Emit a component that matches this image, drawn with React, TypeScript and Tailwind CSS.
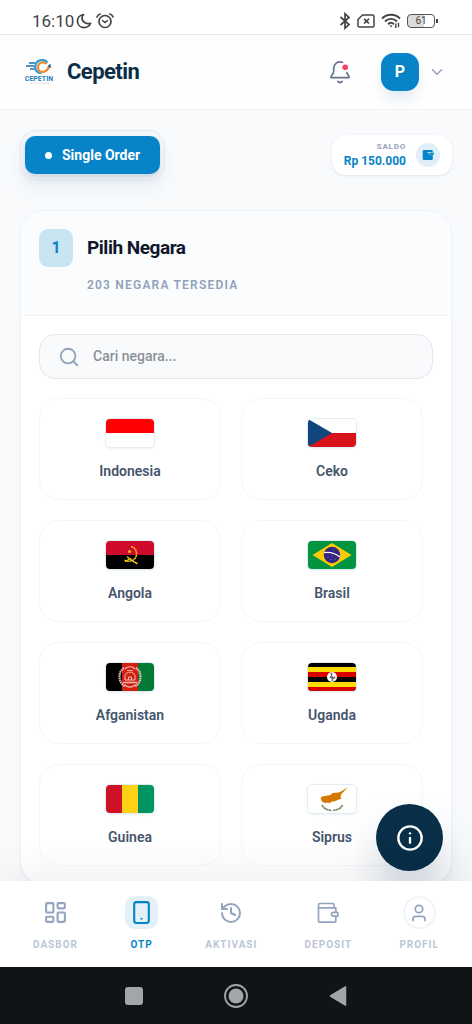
import type { ReactNode } from "react";
import { ChevronDown, History, Info, LayoutDashboard, Search, Smartphone } from "lucide-react";

function FlagIndonesia() {
  return (
    <>
      <rect width="48" height="28" fill="#fff" />
      <rect width="48" height="14" fill="#fe0000" />
    </>
  );
}

function FlagCeko() {
  return (
    <>
      <rect width="48" height="28" fill="#fff" />
      <rect y="14" width="48" height="14" fill="#d7141a" />
      <path d="M0 0 L24 14 L0 28 Z" fill="#11457e" />
    </>
  );
}

function FlagAngola() {
  return (
    <>
      <rect width="48" height="14" fill="#ce0b2d" />
      <rect y="14" width="48" height="14" fill="#000" />
      <g fill="none" stroke="#f9c916" strokeLinecap="round">
        <path d="M25 5.500 C31 7 32 14 28.500 18 C26 20.500 21.500 21 18.500 19" strokeWidth="1.500" strokeDasharray="2.200 .5" strokeLinecap="butt" />
        <path d="M21.500 16 C24 18 27 20.500 31 22.500" strokeWidth="1.400" />
        <path d="M19.500 20.500 L24 17.500" strokeWidth="1.200" />
      </g>
      <path d="M23.500 8.200 L24.200 9.800 L25.600 9.900 L24.500 10.900 L24.900 12.400 L23.500 11.600 L22.100 12.400 L22.500 10.900 L21.400 9.900 L22.800 9.800 Z" fill="#f9c916" />
    </>
  );
}

function FlagBrasil() {
  return (
    <>
      <rect width="48" height="28" fill="#029440" />
      <path d="M24 2 L43.500 14 L24 26 L4.500 14 Z" fill="#fbca05" />
      <circle cx="24" cy="14" r="8.200" fill="#302681" />
      <path d="M16.200 11.700 C21.500 10.800 28 13 32 16" fill="none" stroke="#fff" strokeWidth="1.300" />
      <g fill="#8d88bd">
        <circle cx="20" cy="16" r=".6" />
        <circle cx="23" cy="18.500" r=".6" />
        <circle cx="27" cy="18" r=".6" />
        <circle cx="24" cy="15" r=".5" />
        <circle cx="26" cy="9" r=".5" />
      </g>
    </>
  );
}

function FlagAfganistan() {
  return (
    <>
      <rect width="16" height="28" fill="#000" />
      <rect x="16" width="16" height="28" fill="#d32011" />
      <rect x="32" width="16" height="28" fill="#007a36" />
      <g fill="none" stroke="#f0b9b2">
        <path d="M18 5 C11.500 9 12 20 19.500 23.500" strokeWidth="2.200" strokeDasharray="1.600 .6" />
        <path d="M30 5 C36.500 9 36 20 28.500 23.500" strokeWidth="2.200" strokeDasharray="1.600 .6" />
        <path d="M19 6 C21.500 3 26.500 3 29 6" strokeWidth="1.200" />
        <path d="M19 17 V12.500 C20.500 8 27.500 8 29 12.500 V17 Z" strokeWidth="1" />
        <path d="M17 19.500 H31 M19 22 C22 24.500 26 24.500 29 22" strokeWidth="1.300" />
        <path d="M22.500 17 V14 H25.500 V17" strokeWidth="1" />
        <path d="M21 7.500 H27" strokeWidth=".9" />
      </g>
    </>
  );
}

function FlagUganda() {
  return (
    <>
      <rect width="48" height="28" fill="#000" />
      <rect y="4" width="48" height="5" fill="#fcdc04" />
      <rect y="9" width="48" height="5" fill="#d90000" />
      <rect y="19" width="48" height="5" fill="#fcdc04" />
      <rect y="24" width="48" height="4" fill="#d90000" />
      <circle cx="24" cy="14" r="5" fill="#fff" />
      <path d="M22.500 10 L24.500 11 L24 13 L27 15.500 L25 16 L25.500 18 H23.500 L23.800 16 L21.500 14.500 L23 12.500 Z" fill="#6b6b6b" />
      <path d="M22 10.500 L23.500 9.600 L24 10.800 Z M25.500 13 L27.500 14.500 L26.500 15.500 Z" fill="#d90000" />
    </>
  );
}

function FlagGuinea() {
  return (
    <>
      <rect width="16" height="28" fill="#ce1126" />
      <rect x="16" width="16" height="28" fill="#fcd116" />
      <rect x="32" width="16" height="28" fill="#009460" />
    </>
  );
}

function FlagSiprus() {
  return (
    <>
      <rect width="48" height="28" fill="#fff" />
      <path
        d="M39.500 2.500 L32 7 C30 8 27 7.500 24.500 8 L22.500 10 L14 11.500 L12.500 13.500 L14 16.500 L17 18 L20.500 17.500 L22 18.500 L23 16.800 L26 16.500 L31 14.500 L33.500 13.500 L32.500 11.500 L33.500 9 Z"
        fill="#d57800"
      />
      <g fill="none" stroke="#7b8763" strokeWidth="1.700" strokeDasharray="2.600 .3">
        <path d="M14 20 C15.500 23.500 19.500 25.300 23.500 25.300" />
        <path d="M34.500 20 C33 23.500 29 25.300 25 25.300" />
      </g>
    </>
  );
}

const COUNTRIES = [
  { name: "Indonesia", flag: <FlagIndonesia /> },
  { name: "Ceko", flag: <FlagCeko /> },
  { name: "Angola", flag: <FlagAngola /> },
  { name: "Brasil", flag: <FlagBrasil /> },
  { name: "Afganistan", flag: <FlagAfganistan /> },
  { name: "Uganda", flag: <FlagUganda /> },
  { name: "Guinea", flag: <FlagGuinea /> },
  { name: "Siprus", flag: <FlagSiprus /> },
];

function StatusBar() {
  return (
    <div className="flex h-[35px] shrink-0 items-center justify-between border-b border-[#e4e4e4] bg-white px-8 pt-2 text-[#444]">
      <div className="flex items-center gap-0.5">
        <span className="text-[17px] leading-5">16:10</span>
        <svg width="16" height="16" viewBox="0 0 16 16" fill="none" stroke="currentColor" strokeWidth="1.700" strokeLinejoin="round">
          <path d="M7.500 1.500 C3.800 2 1.300 5 1.500 8.600 C1.800 12.200 4.700 14.600 8 14.600 C11 14.600 13.500 13 14.600 10.300 C11 11.500 6 9.500 6 5 C6 3.500 6.600 2.300 7.500 1.500 Z" />
        </svg>
        <svg className="ml-0.5" width="18" height="16" viewBox="0 0 18 16" fill="none" stroke="currentColor" strokeWidth="1.700" strokeLinecap="round">
          <circle cx="9" cy="8.500" r="6" />
          <path d="M6.500 7.500 L9 9.500 L11.500 7.500" strokeWidth="1.500" />
          <path d="M1 4 C1.500 2.500 2.800 1.300 4.200 1 M17 4 C16.500 2.500 15.200 1.300 13.800 1" />
        </svg>
      </div>
      <div className="flex items-center gap-1.5 pr-0.5">
        <svg width="12" height="18" viewBox="0 0 12 18" fill="none" stroke="currentColor" strokeWidth="1.700">
          <path d="M1.500 5 L10 12.500 L6 16.200 V1.800 L10 5.500 L1.500 13" />
        </svg>
        <svg width="18" height="14" viewBox="0 0 18 14" fill="none" stroke="currentColor" strokeWidth="1.500" strokeLinejoin="round">
          <path d="M5.500 1 H15.500 Q17 1 17 2.500 V11.500 Q17 13 15.500 13 H2.500 Q1 13 1 11.500 V5.500 Z" />
          <path d="M7 4.800 L12 9.500 M12 4.800 L7 9.500" strokeWidth="1.700" />
        </svg>
        <svg width="20" height="16" viewBox="0 0 20 16" fill="none" stroke="currentColor" strokeWidth="1.900">
          <path d="M1 5.500 C6 .5 14 .5 19 5.500" />
          <path d="M4 8.500 C7.500 5 12.500 5 16 8.500" />
          <path d="M7 11.200 C8.800 9.500 11.200 9.500 13 11.200" />
          <path d="M8.500 12.500 L10 14.500 L11.500 12.500 Z" fill="currentColor" stroke="none" />
          <path d="M14.800 10.500 V15 M17.500 9.800 V14.200" strokeWidth="1.400" />
        </svg>
        <div className="flex items-center gap-px">
          <span className="flex h-[14px] w-[28px] items-center justify-center rounded-[4px] border border-[#555] bg-linear-to-r from-[#dcdcdc] from-60% to-white to-60% text-[10px] leading-none">
            61
          </span>
          <span className="h-1 w-0.5 bg-[#444]" />
        </div>
      </div>
    </div>
  );
}

function Logo() {
  return (
    <svg width="28" height="26" viewBox="0 0 28 26" fill="none">
      <path d="M22.500 3.500 C19 -.5 12 .5 10.500 6 C9 11 12.500 14.500 16.500 14" stroke="#2e9fd0" strokeWidth="2.200" />
      <path d="M21.500 5 C19 2.200 14 3 13 7.300 C12.300 11.500 16 14 19.500 12.500 C22 11.500 23.500 9.500 24.500 7" stroke="#ef8a34" strokeWidth="2.200" />
      <path d="M22.300 7.500 L25.500 4.500 L26 9 Z" fill="#1c6fb5" />
      <path d="M4 4 H10 M1 7 H9.500 M5 10 H9.500" stroke="#1c6fb5" strokeWidth="1.300" />
      <text x="14" y="21.500" textAnchor="middle" fontSize="7" fontWeight="700" fill="#1e7fc0">
        CEPETIN
      </text>
      <path d="M5 24 H24" stroke="#c9ced6" strokeWidth=".8" strokeDasharray="2 .6" />
    </svg>
  );
}

function Header() {
  return (
    <header className="flex h-[75px] shrink-0 items-center justify-between border-b border-slate-100 bg-white/80 pr-[26px] pl-[25px]">
      <a href="#" className="flex items-center gap-3.5">
        <Logo />
        <span className="text-[22px] leading-7 font-bold tracking-tight text-[#0a2e47]">Cepetin</span>
      </a>
      <div className="flex items-center">
        <button type="button" aria-label="Notifikasi" className="mr-[29px]">
          <svg width="24" height="24" viewBox="0 0 24 24" fill="none" stroke="#64748b" strokeWidth="1.700" strokeLinecap="round" strokeLinejoin="round">
            <path d="M14.500 2.300 C9.500 .8 5.800 4 5.700 8.300 V11.500 C5.500 14.500 2.500 15.800 3 17.600 H21 C21.500 15.800 19.500 15 18.700 12.500" />
            <path d="M10 21.500 C11 22.800 13 22.800 14 21.500" strokeWidth="2" />
            <circle cx="17.200" cy="7.300" r="2.800" fill="#f43f5e" stroke="none" />
          </svg>
        </button>
        <button type="button" className="flex items-center gap-[9px]">
          <span className="flex size-[38px] items-center justify-center rounded-[13px] bg-[#0784c7] text-base font-bold text-white shadow-lg shadow-slate-200">
            P
          </span>
          <ChevronDown size={18} strokeWidth={2} className="text-slate-400" />
        </button>
      </div>
    </header>
  );
}

function OrderBar() {
  return (
    <div className="flex items-center justify-between">
      <div className="rounded-2xl border border-slate-200 bg-slate-100/80 px-1 py-[5px] shadow-lg shadow-slate-200/70">
        <button
          type="button"
          className="flex h-[38px] items-center gap-2.5 rounded-[10px] bg-[#0784c7] px-5 text-[14px] font-bold text-white shadow-md shadow-slate-300"
        >
          <span className="size-[7px] rounded-full bg-white" />
          Single Order
        </button>
      </div>
      <div className="flex h-10 items-center gap-2.5 rounded-[14px] bg-white px-3 shadow-sm shadow-slate-200">
        <div className="text-right">
          <p className="text-[8px] leading-3 font-bold tracking-widest text-slate-400">SALDO</p>
          <p className="text-[12px] leading-4 font-bold text-[#0784c7]">Rp 150.000</p>
        </div>
        <span className="flex size-6 items-center justify-center rounded-full bg-[#e1f0f8]">
          <svg width="12" height="12" viewBox="0 0 12 12">
            <path d="M2 1 H9.500 Q10.800 1 10.800 2.300 V3.500 H11.500 V6 H10.800 V9.700 Q10.800 11 9.500 11 H2 Q.7 11 .7 9.700 V2.300 Q.7 1 2 1 Z" fill="#0784c7" />
            <path d="M5 3 H11 V5.500 H8 Z" fill="#d5ebf7" />
            <path d="M6.500 3.800 L11.500 3.600 V5.500 H8.500 Z" fill="#0784c7" />
          </svg>
        </span>
      </div>
    </div>
  );
}

function CountryCard({ name, flag }: { name: string; flag: ReactNode }) {
  return (
    <button
      type="button"
      className="flex h-[102px] flex-col items-center rounded-[20px] border border-[#f4f6f9] bg-white pt-5"
    >
      <svg width="48" height="28" viewBox="0 0 48 28" className="rounded-[4px] shadow-[0_0_0_1px_#e2eef4,0_1px_3px_#dbe3ea]">
        {flag}
      </svg>
      <span className="mt-3.5 text-[14px] leading-5 font-semibold text-slate-600">{name}</span>
    </button>
  );
}

function DepositIcon() {
  return (
    <svg width="22" height="22" viewBox="0 0 22 22" fill="none" stroke="currentColor" strokeWidth="1.700" strokeLinejoin="round">
      <path d="M18.800 10 V5.800 H1.500 V19 Q1.500 20.200 2.700 20.200 H17.600 Q18.800 20.200 18.800 19 V14.500" />
      <path d="M1.500 5.800 V3 Q1.500 1.500 3 1.500 H16 Q17 1.500 17 2.500 V5.800" />
      <path d="M20.800 10.300 H16.500 Q14.500 10.300 14.500 12.300 Q14.500 14.200 16.500 14.200 H20.800 Z" />
    </svg>
  );
}

const NAV_ITEMS = [
  { label: "DASBOR", icon: <LayoutDashboard size={25} strokeWidth={2} /> },
  { label: "OTP", icon: <Smartphone size={25} strokeWidth={2} />, active: true },
  { label: "AKTIVASI", icon: <History size={24} strokeWidth={2} /> },
  { label: "DEPOSIT", icon: <DepositIcon /> },
  {
    label: "PROFIL",
    icon: (
      <span className="flex size-[33px] items-center justify-center rounded-full border-2 border-slate-100">
        <svg width="16" height="18" viewBox="0 0 16 18" fill="none" stroke="currentColor" strokeWidth="1.700" strokeLinecap="round">
          <circle cx="8" cy="5" r="3.700" />
          <path d="M2 16.500 V15 Q2 12.300 4.700 12.300 H11.300 Q14 12.300 14 15 V16.500" />
        </svg>
      </span>
    ),
  },
];

function BottomNav() {
  return (
    <nav className="relative flex h-[86px] shrink-0 items-start justify-between bg-white px-[33px] pt-[15px] shadow-[0_-10px_40px_rgba(0,0,0,0.06)]">
      {NAV_ITEMS.map((item) => (
        <a key={item.label} href="#" className="flex flex-col items-center gap-2">
          <span
            className={
              item.active
                ? "flex size-[33px] items-center justify-center rounded-[10px] bg-[#e3f0f8] text-[#0784c7]"
                : "flex size-[33px] items-center justify-center text-[#94a3c0]"
            }
          >
            {item.icon}
          </span>
          <span
            className={
              item.active
                ? "text-[10px] leading-4 font-bold tracking-widest text-[#0784c7]"
                : "text-[10px] leading-4 font-bold tracking-widest text-[#bcc6d5]"
            }
          >
            {item.label}
          </span>
        </a>
      ))}
    </nav>
  );
}

function SystemBar() {
  return (
    <div className="relative flex h-[57px] shrink-0 items-center justify-center gap-20 bg-[#0f1417]">
      <span className="size-[18px] rounded-[3px] bg-[#a3a5a8]" />
      <svg width="26" height="26" viewBox="0 0 26 26">
        <circle cx="13" cy="13" r="11" fill="none" stroke="#a3a5a8" strokeWidth="1.800" />
        <circle cx="13" cy="13" r="7.500" fill="#a3a5a8" />
      </svg>
      <svg width="18" height="20" viewBox="0 0 18 20">
        <path d="M16.500 1 V19 L1.500 10 Z" fill="#a3a5a8" stroke="#a3a5a8" strokeWidth="1.500" strokeLinejoin="round" />
      </svg>
    </div>
  );
}

export default function App() {
  return (
    <div className="flex h-screen flex-col overflow-hidden bg-[#f8fafc] font-['Roboto',sans-serif]">
      <StatusBar />
      <Header />

      <div className="relative min-h-0 flex-1">
        <main className="h-full overflow-y-auto p-5 [scrollbar-width:none]">
          <OrderBar />

          <section className="mt-[30px] rounded-3xl border border-[#f1f4f8] bg-white shadow-sm shadow-slate-200/40">
            {/* Step header */}
            <div className="flex h-[105px] items-start gap-3.5 rounded-t-3xl border-b border-slate-100 bg-slate-50/60 px-[18px] pt-[18px]">
              <span className="flex h-[38px] w-[34px] items-center justify-center rounded-[9px] bg-[#c9e5f2] text-base font-bold text-[#0784c7]">
                1
              </span>
              <div>
                <h1 className="text-[19px] leading-[38px] font-bold tracking-tight text-slate-900">Pilih Negara</h1>
                <p className="mt-2.5 text-[12px] leading-4 font-semibold tracking-widest text-slate-400">
                  203 NEGARA TERSEDIA
                </p>
              </div>
            </div>

            <div className="p-[18px]">
              <label className="flex h-[45px] items-center gap-[13px] rounded-2xl border border-slate-200 bg-slate-50 px-[18px]">
                <Search size={22} strokeWidth={2} className="text-[#94a3c0]" />
                <input
                  type="text"
                  aria-label="Cari negara"
                  placeholder="Cari negara..."
                  className="min-w-0 flex-1 bg-transparent text-[14px] font-medium text-slate-700 outline-none placeholder:text-[#8b8f98]"
                />
              </label>

              <div className="mt-[19px] grid grid-cols-2 gap-5 pr-2.5">
                {COUNTRIES.map((c) => (
                  <CountryCard key={c.name} name={c.name} flag={c.flag} />
                ))}
              </div>
            </div>
          </section>
        </main>

        <button
          type="button"
          aria-label="Info"
          className="absolute right-[29px] bottom-[10px] flex size-[67px] items-center justify-center rounded-full bg-[#082e48] text-white shadow-2xl shadow-slate-400"
        >
          <Info size={28} strokeWidth={2} />
        </button>
      </div>

      <BottomNav />
      <SystemBar />
    </div>
  );
}
